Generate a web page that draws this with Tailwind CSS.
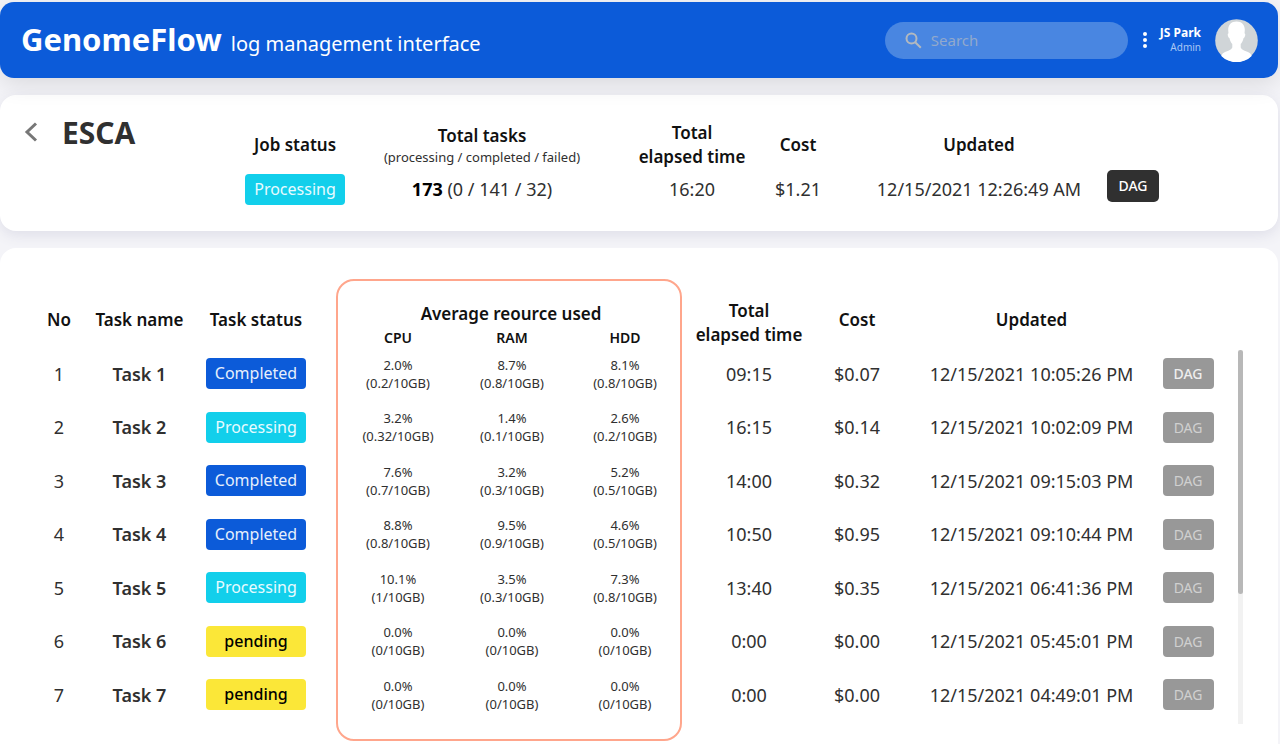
<!DOCTYPE html>
<html lang="en">
<head>
<meta charset="utf-8">
<meta name="viewport" content="width=device-width, initial-scale=1">
<title>GenomeFlow log management interface</title>
<script src="https://cdn.jsdelivr.net/npm/@tailwindcss/browser@4"></script>
</head>
<body class="min-h-screen overflow-x-hidden bg-[#f4f4f8] pt-[2px] pr-[2px] font-['Noto_Sans',sans-serif] text-[#303030]">
<header class="relative z-10 flex h-[76px] items-center rounded-[14px] bg-[#0c5bd9] pr-5 pl-[21px] shadow-[0_6px_24px_#0000001c]">
  <h1 class="flex flex-1 items-baseline gap-[9px] pt-[2px] whitespace-nowrap text-white">
    <span class="text-[31px] leading-10 font-bold">GenomeFlow</span>
    <span class="text-[20px] leading-10">log management interface</span>
  </h1>
  <label class="flex h-[37px] w-[243px] items-center gap-[9px] rounded-full bg-[#4986e1] pl-5">
    <svg class="size-[17px] shrink-0" viewBox="0 0 17 17" fill="none" stroke="#b3b9bf" stroke-width="2" aria-hidden="true"><circle cx="6.5" cy="6.5" r="5"/><path d="M10.2 10.2l5.6 5.6"/></svg>
    <input type="search" aria-label="Search" placeholder="Search" class="w-full min-w-0 bg-transparent text-[15px] text-white outline-none placeholder:text-[#92a9cc]">
  </label>
  <button type="button" aria-label="More options" class="ml-[14px] flex h-6 w-[6px] items-center justify-center">
    <svg class="h-4 w-1" viewBox="0 0 4 16" fill="#fff" aria-hidden="true"><circle cx="2" cy="2" r="2"/><circle cx="2" cy="8" r="2"/><circle cx="2" cy="14" r="2"/></svg>
  </button>
  <div class="ml-3 text-right whitespace-nowrap text-white">
    <p class="text-[12px] leading-[15px] font-bold">JS Park</p>
    <p class="text-[10px] leading-[15px] text-[#a9c6f3]">Admin</p>
  </div>
  <svg class="ml-[14px] size-[43px] shrink-0" viewBox="0 0 43 43" role="img" aria-label="JS Park">
    <circle cx="21.500" cy="21.500" r="21.300" fill="#d0d5d8"/>
    <path fill="#fff" d="M21.500 2.500c-5.300 0-8.400 3.500-8.300 8.400 0 1.300.2 2.500.3 3.300-.7.200-.9 1-.7 2.100.3 1.600.9 2.600 1.700 2.900.5 2.500 1.500 4.500 2.800 5.800v3.500c-.8 2.500-5.300 3.500-8.500 5.200-1.200.7-2 1.800-2.500 3.200a21.300 21.300 0 0 0 30.400 0c-.5-1.400-1.300-2.500-2.500-3.200-3.200-1.700-7.700-2.700-8.500-5.200V25c1.300-1.300 2.300-3.300 2.800-5.800.8-.3 1.400-1.300 1.700-2.900.2-1.100 0-1.900-.7-2.100.1-.8.300-2 .3-3.300.1-4.900-3-8.400-8.300-8.400z"/>
  </svg>
</header>

<main>
  <section class="relative mt-[17px] flex h-[136px] rounded-[16px] bg-white pr-[117px] shadow-[0_4px_14px_#dedee8]">
    <div class="flex w-[231px] shrink-0 items-start pt-4 pl-6">
      <button type="button" aria-label="Back" class="flex h-[42px] w-[14px] items-center">
        <svg class="h-5 w-[14px]" viewBox="0 0 14 20" fill="none" stroke="#777" stroke-width="3" aria-hidden="true"><path d="M12 1.500L3 10l9 8.500"/></svg>
      </button>
      <h2 class="ml-6 text-[30px] leading-[44px] font-bold">ESCA</h2>
    </div>
    <table class="mt-[26px] h-20 w-full table-fixed text-center text-[18px] leading-6 whitespace-nowrap">
      <colgroup><col class="w-[128px]"><col class="w-[274px]"><col class="w-[118px]"><col class="w-[94px]"><col class="w-[258px]"><col class="w-[60px]"></colgroup>
      <thead class="text-[17px] text-[#111]">
        <tr class="h-12">
          <th class="font-semibold">Job status</th>
          <th class="pr-7 font-semibold">Total tasks<span class="block text-[13px] leading-[18px] font-normal text-[#303030]">(processing / completed / failed)</span></th>
          <th class="font-semibold">Total<br>elapsed time</th>
          <th class="font-semibold">Cost</th>
          <th class="pl-[10px] font-semibold">Updated</th>
          <td></td>
        </tr>
      </thead>
      <tbody>
        <tr class="h-10">
          <td><span class="mx-auto block h-[31px] w-[100px] rounded-[4px] bg-[#12cfeb] text-[16px] leading-[30px] text-[#e8fbff]">Processing</span></td>
          <td class="pr-7"><b class="font-bold text-black">173</b> (0 / 141 / 32)</td>
          <td>16:20</td>
          <td>$1.21</td>
          <td class="pl-[10px]">12/15/2021 12:26:49 AM</td>
          <td class="align-top"><button type="button" class="mx-auto mt-px block h-8 w-[52px] rounded-[5px] bg-[#303030] text-[14px] leading-8 font-medium text-white">DAG</button></td>
        </tr>
      </tbody>
    </table>
  </section>

  <section class="relative mt-[17px] flex min-h-[496px] items-start rounded-t-[16px] bg-white pt-[51px] pr-[35px] pl-[38px]">
    <div class="relative flex-1">
      <table class="w-full table-fixed text-center text-[18px] leading-6 whitespace-nowrap">
        <colgroup><col class="w-[42px]"><col class="w-[119px]"><col class="w-[114px]"><col class="w-[28px]"><col class="w-[114px]"><col class="w-[114px]"><col class="w-[112px]"><col class="w-[9px]"><col class="w-[118px]"><col class="w-[98px]"><col class="w-[251px]"><col class="w-[62px]"></colgroup>
        <thead class="text-[17px] text-[#111]">
          <tr class="h-[27px]">
            <th rowspan="2" class="pb-[6px] font-semibold">No</th>
            <th rowspan="2" class="pb-[6px] font-semibold">Task name</th>
            <th rowspan="2" class="pb-[6px] font-semibold">Task status</th>
            <td rowspan="2"></td>
            <th colspan="3" class="pt-[3px] font-semibold">Average reource used</th>
            <td rowspan="2"></td>
            <th rowspan="2" class="font-semibold">Total<br>elapsed time</th>
            <th rowspan="2" class="pb-[6px] font-semibold">Cost</th>
            <th rowspan="2" class="pb-[6px] font-semibold">Updated</th>
            <td rowspan="2"></td>
          </tr>
          <tr class="h-[21px] text-[14px] leading-[18px]">
            <th class="pt-[3px] font-semibold">CPU</th>
            <th class="pt-[3px] font-semibold">RAM</th>
            <th class="pt-[3px] font-semibold">HDD</th>
          </tr>
        </thead>
        <tbody id="tasks"></tbody>
      </table>
      <div class="pointer-events-none absolute -top-5 left-[25.200%] h-[462px] w-[29.300%] rounded-[18px] border-2 border-[#ffa68c]"></div>
    </div>
    <div class="mt-[51px] ml-[19px] h-[374px] w-[5px] bg-[#f2f2f2]"><div class="h-[244px] rounded-sm bg-[#b8b8b8]"></div></div>
  </section>
</main>

<script>
const badge = {
  Completed: 'bg-[#0c5bd9] text-[#e6effc]',
  Processing: 'bg-[#12cfeb] text-[#e8fbff]',
  pending: 'bg-[#fbe738] text-black font-medium'
};
const tasks = [
  ['Completed', ['2.0%', '0.2'], ['8.7%', '0.8'], ['8.1%', '0.8'], '09:15', '$0.07', '10:05:26'],
  ['Processing', ['3.2%', '0.32'], ['1.4%', '0.1'], ['2.6%', '0.2'], '16:15', '$0.14', '10:02:09'],
  ['Completed', ['7.6%', '0.7'], ['3.2%', '0.3'], ['5.2%', '0.5'], '14:00', '$0.32', '09:15:03'],
  ['Completed', ['8.8%', '0.8'], ['9.5%', '0.9'], ['4.6%', '0.5'], '10:50', '$0.95', '09:10:44'],
  ['Processing', ['10.1%', '1'], ['3.5%', '0.3'], ['7.3%', '0.8'], '13:40', '$0.35', '06:41:36'],
  ['pending', ['0.0%', '0'], ['0.0%', '0'], ['0.0%', '0'], '0:00', '$0.00', '05:45:01'],
  ['pending', ['0.0%', '0'], ['0.0%', '0'], ['0.0%', '0'], '0:00', '$0.00', '04:49:01']
];
const usage = ([percent, amount]) => `<td class="text-[13px] leading-[18px]">${percent}<br>(${amount}/10GB)</td>`;
document.getElementById('tasks').innerHTML = tasks.map(([status, cpu, ram, hdd, time, cost, updated], i) => `
  <tr class="odd:h-[53px] even:h-[54px]">
    <td>${i + 1}</td>
    <td class="font-semibold">Task ${i + 1}</td>
    <td><span class="mx-auto block h-[31px] w-[100px] rounded-[4px] text-[16px] leading-[30px] ${badge[status]}">${status}</span></td>
    <td></td>${usage(cpu)}${usage(ram)}${usage(hdd)}<td></td>
    <td>${time}</td>
    <td>${cost}</td>
    <td>12/15/2021 ${updated} PM</td>
    <td><button type="button" class="mx-auto block h-[31px] w-[51px] rounded-[4px] bg-[#989898] text-[14px] leading-[31px] ${i === 0 ? 'font-medium text-[#eeeeee]' : 'text-[#d0d0d0]'}">DAG</button></td>
  </tr>`).join('');
</script>
</body>
</html>
